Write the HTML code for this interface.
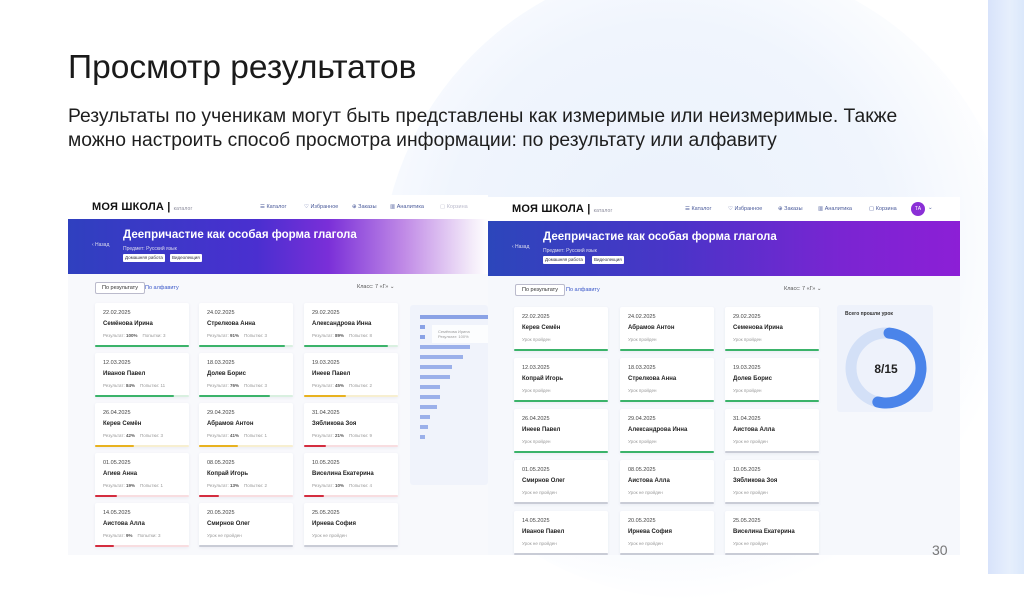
<!DOCTYPE html>
<html><head><meta charset="utf-8"><style>
*{margin:0;padding:0;box-sizing:border-box}
body{width:1024px;height:574px;overflow:hidden;position:relative;background:#fff;font-family:"Liberation Sans",sans-serif;color:#222}
.blob{position:absolute;left:380px;top:-40px;width:640px;height:640px;border-radius:50%;background:radial-gradient(circle at 45% 45%,#eaf1fc 0%,#f0f5fd 45%,rgba(246,249,254,.6) 62%,rgba(255,255,255,0) 71%)}
.strip{position:absolute;left:988px;top:0;width:36px;height:574px;background:linear-gradient(90deg,#d8e3fb,#e6effc 60%,#dbe8fb)}
h1{position:absolute;left:68px;top:49px;font-size:33.5px;font-weight:normal;color:#1a1a1a}
.p{position:absolute;left:68px;top:105px;font-size:19.3px;line-height:24px;color:#1e1e1e}
.shot{position:absolute;background:#f6f8fc;overflow:hidden}
.hdr{position:absolute;left:0;top:0;right:0;height:24px;background:#fff}
.logo{position:absolute;left:24px;top:6px;font-weight:bold;font-size:11px;color:#111;letter-spacing:.2px}
.logo i{font-style:normal;font-weight:normal;font-size:5px;color:#889;margin-left:3px}
.nav{position:absolute;top:9px;font-size:5.5px;color:#4a5a9a}
.ban{position:absolute;left:0;top:24px;right:0;height:55px}
.ban .t{position:absolute;left:55px;top:10px;color:#fff;font-weight:bold;font-size:11.5px}
.ban .s{position:absolute;left:55px;top:27px;color:#dde;font-size:5px}
.ban .b{position:absolute;top:35px;height:8px;background:#fff;color:#334;font-size:4.5px;line-height:8px;padding:0 2px;border-radius:1px}
.ban .k{position:absolute;left:24px;top:23px;color:#dde;font-size:5px}
.tab{position:absolute;top:87px;height:12px;font-size:5.5px;line-height:11px}
.tab.a{border:1px solid #bbc;border-radius:2px;background:#fff;padding:0 6px;color:#333}
.tab.b{color:#3b58c9}
.cls{position:absolute;top:89px;font-size:5.5px;color:#555}
.c{position:absolute;width:94px;height:44px;background:#fff;border-radius:2px;box-shadow:0 1px 3px rgba(80,90,140,.08)}
.c .d{position:absolute;left:8px;top:7px;font-size:5.5px;color:#444}
.c .n{position:absolute;left:8px;top:18px;font-size:6px;font-weight:bold;color:#222}
.c .r{position:absolute;left:8px;top:30px;font-size:4.5px;color:#999;white-space:nowrap}
.c .r b{color:#555}
.c .l{position:absolute;left:0;right:0;bottom:0;height:2px;border-radius:1px}
.c .l s{display:block;height:2px;border-radius:1px}
</style></head><body>
<div class="blob"></div>
<div class="strip"></div>
<h1>Просмотр результатов</h1>
<div class="p">Результаты по ученикам могут быть представлены как измеримые или неизмеримые. Также<br>можно настроить способ просмотра информации: по результату или алфавиту</div>

<!-- LEFT SCREENSHOT -->
<div class="shot" style="left:68px;top:195px;width:420px;height:360px;background:#f8f9fc">
<div class="hdr"><div class="logo">МОЯ ШКОЛА |<i>каталог</i></div>
<span class="nav" style="left:192px">☰ Каталог</span><span class="nav" style="left:236px">♡ Избранное</span><span class="nav" style="left:284px">⊕ Заказы</span><span class="nav" style="left:322px">▥ Аналитика</span><span class="nav" style="left:372px;color:#bbc">▢ Корзина</span></div>
<div class="ban" style="background:linear-gradient(90deg,#2f40bf 0%,#4a2fd0 45%,#7a2fd8 62%,#c08ae6 80%,#f3eaf9 96%,#fff 100%)">
<div class="k">‹ Назад</div><div class="t">Деепричастие как особая форма глагола</div><div class="s">Предмет: Русский язык</div>
<span class="b" style="left:55px">Домашняя работа</span><span class="b" style="left:102px">Видеолекция</span></div>
<span class="tab a" style="left:27px">По результату</span><span class="tab b" style="left:77px;top:88px">По алфавиту</span>
<span class="cls" style="left:289px">Класс: 7 «Г» ⌄</span>
<div style="position:absolute;left:342px;top:110px;width:78px;height:180px;background:#f0f3fb;border-radius:3px">
<div style="position:absolute;left:10px;top:10px;width:68px;height:4px;background:#8aa2e6"></div>
<div style="position:absolute;left:10px;top:20px;width:5px;height:4px;background:#8aa2e6"></div>
<div style="position:absolute;left:10px;top:30px;width:5px;height:4px;background:#8aa2e6"></div>
<div style="position:absolute;left:10px;top:40px;width:50px;height:4px;background:#9bb0ea"></div>
<div style="position:absolute;left:10px;top:50px;width:43px;height:4px;background:#9bb0ea"></div>
<div style="position:absolute;left:10px;top:60px;width:32px;height:4px;background:#9bb0ea"></div>
<div style="position:absolute;left:10px;top:70px;width:30px;height:4px;background:#9bb0ea"></div>
<div style="position:absolute;left:10px;top:80px;width:20px;height:4px;background:#9bb0ea"></div>
<div style="position:absolute;left:10px;top:90px;width:20px;height:4px;background:#9bb0ea"></div>
<div style="position:absolute;left:10px;top:100px;width:17px;height:4px;background:#9bb0ea"></div>
<div style="position:absolute;left:10px;top:110px;width:10px;height:4px;background:#9bb0ea"></div>
<div style="position:absolute;left:10px;top:120px;width:8px;height:4px;background:#9bb0ea"></div>
<div style="position:absolute;left:10px;top:130px;width:5px;height:4px;background:#9bb0ea"></div>
<div style="position:absolute;left:22px;top:20px;width:56px;height:18px;background:rgba(255,255,255,.8);font-size:4px;color:#999;padding:4px 6px">Семёнова Ирина<br>Результат: 100%</div>
</div>

<div class="c" style="left:27px;top:108px"><div class="d">22.02.2025</div><div class="n">Семёнова Ирина</div><div class="r">Результат: <b>100%</b> &nbsp;&nbsp; Попытки: 3</div><div class="l" style="background:#d9f0e0"><s style="width:100%;background:#3bb36a"></s></div></div>
<div class="c" style="left:131px;top:108px"><div class="d">24.02.2025</div><div class="n">Стрелкова Анна</div><div class="r">Результат: <b>91%</b> &nbsp;&nbsp; Попытки: 3</div><div class="l" style="background:#d9f0e0"><s style="width:91%;background:#3bb36a"></s></div></div>
<div class="c" style="left:236px;top:108px"><div class="d">29.02.2025</div><div class="n">Александрова Инна</div><div class="r">Результат: <b>89%</b> &nbsp;&nbsp; Попытки: 8</div><div class="l" style="background:#d9f0e0"><s style="width:89%;background:#3bb36a"></s></div></div>

<div class="c" style="left:27px;top:158px"><div class="d">12.03.2025</div><div class="n">Иванов Павел</div><div class="r">Результат: <b>84%</b> &nbsp;&nbsp; Попытки: 11</div><div class="l" style="background:#d9f0e0"><s style="width:84%;background:#3bb36a"></s></div></div>
<div class="c" style="left:131px;top:158px"><div class="d">18.03.2025</div><div class="n">Долев Борис</div><div class="r">Результат: <b>76%</b> &nbsp;&nbsp; Попытки: 3</div><div class="l" style="background:#d9f0e0"><s style="width:76%;background:#3bb36a"></s></div></div>
<div class="c" style="left:236px;top:158px"><div class="d">19.03.2025</div><div class="n">Инеев Павел</div><div class="r">Результат: <b>45%</b> &nbsp;&nbsp; Попытки: 2</div><div class="l" style="background:#f7efd0"><s style="width:45%;background:#e8b21f"></s></div></div>

<div class="c" style="left:27px;top:208px"><div class="d">26.04.2025</div><div class="n">Керев Семён</div><div class="r">Результат: <b>42%</b> &nbsp;&nbsp; Попытки: 3</div><div class="l" style="background:#f7efd0"><s style="width:42%;background:#e8b21f"></s></div></div>
<div class="c" style="left:131px;top:208px"><div class="d">29.04.2025</div><div class="n">Абрамов Антон</div><div class="r">Результат: <b>41%</b> &nbsp;&nbsp; Попытки: 1</div><div class="l" style="background:#f7efd0"><s style="width:41%;background:#e8b21f"></s></div></div>
<div class="c" style="left:236px;top:208px"><div class="d">31.04.2025</div><div class="n">Зябликова Зоя</div><div class="r">Результат: <b>21%</b> &nbsp;&nbsp; Попытки: 9</div><div class="l" style="background:#f8dde0"><s style="width:23%;background:#d42d3f"></s></div></div>

<div class="c" style="left:27px;top:258px"><div class="d">01.05.2025</div><div class="n">Агиев Анна</div><div class="r">Результат: <b>19%</b> &nbsp;&nbsp; Попытки: 1</div><div class="l" style="background:#f8dde0"><s style="width:23%;background:#d42d3f"></s></div></div>
<div class="c" style="left:131px;top:258px"><div class="d">08.05.2025</div><div class="n">Копрай Игорь</div><div class="r">Результат: <b>13%</b> &nbsp;&nbsp; Попытки: 2</div><div class="l" style="background:#f8dde0"><s style="width:21%;background:#d42d3f"></s></div></div>
<div class="c" style="left:236px;top:258px"><div class="d">10.05.2025</div><div class="n">Виселина Екатерина</div><div class="r">Результат: <b>10%</b> &nbsp;&nbsp; Попытки: 4</div><div class="l" style="background:#f8dde0"><s style="width:21%;background:#d42d3f"></s></div></div>

<div class="c" style="left:27px;top:308px"><div class="d">14.05.2025</div><div class="n">Аистова Алла</div><div class="r">Результат: <b>9%</b> &nbsp;&nbsp; Попытки: 3</div><div class="l" style="background:#f8dde0"><s style="width:20%;background:#d42d3f"></s></div></div>
<div class="c" style="left:131px;top:308px"><div class="d">20.05.2025</div><div class="n">Смирнов Олег</div><div class="r">Урок не пройден</div><div class="l" style="background:#c9ccd6"></div></div>
<div class="c" style="left:236px;top:308px"><div class="d">25.05.2025</div><div class="n">Ирнева София</div><div class="r">Урок не пройден</div><div class="l" style="background:#c9ccd6"></div></div>
</div>

<!-- RIGHT SCREENSHOT -->
<div class="shot" style="left:488px;top:197px;width:472px;height:358px">
<div class="hdr"><div class="logo">МОЯ ШКОЛА |<i>каталог</i></div>
<span class="nav" style="left:197px">☰ Каталог</span><span class="nav" style="left:240px">♡ Избранное</span><span class="nav" style="left:290px">⊕ Заказы</span><span class="nav" style="left:330px">▥ Аналитика</span><span class="nav" style="left:381px">▢ Корзина</span>
<div style="position:absolute;left:423px;top:5px;width:14px;height:14px;border-radius:50%;background:#8a2fd6;color:#fff;font-size:5px;text-align:center;line-height:14px">ТА</div><span class="nav" style="left:440px;top:8px">⌄</span></div>
<div class="ban" style="background:linear-gradient(90deg,#2c46bb 0%,#4a34c8 40%,#7a25d2 75%,#8c1fd6 100%)">
<div class="k">‹ Назад</div><div class="t">Деепричастие как особая форма глагола</div><div class="s">Предмет: Русский язык</div>
<span class="b" style="left:55px">Домашняя работа</span><span class="b" style="left:104px">Видеолекция</span></div>
<span class="tab a" style="left:27px">По результату</span><span class="tab b" style="left:78px;top:88px">По алфавиту</span>
<span class="cls" style="left:296px">Класс: 7 «Г» ⌄</span>

<div style="position:absolute;left:349px;top:108px;width:96px;height:107px;background:#eef2fb;border-radius:3px">
<div style="position:absolute;left:8px;top:6px;font-size:5px;font-weight:bold;color:#333">Всего прошли урок</div>
<svg style="position:absolute;left:0;top:0" width="96" height="107"><circle cx="49" cy="63" r="35" fill="none" stroke="#d3e0f7" stroke-width="11"/><circle cx="49" cy="63" r="35" fill="none" stroke="#4a84ea" stroke-width="11" stroke-linecap="round" stroke-dasharray="115 220" transform="rotate(-85 49 63)"/><text x="49" y="68" text-anchor="middle" font-family="Liberation Sans" font-weight="bold" font-size="12" fill="#222">8/15</text></svg>
</div>

<div class="c" style="left:26px;top:110px"><div class="d">22.02.2025</div><div class="n">Керев Семён</div><div class="r">Урок пройден</div><div class="l" style="background:#3bb36a"></div></div>
<div class="c" style="left:132px;top:110px"><div class="d">24.02.2025</div><div class="n">Абрамов Антон</div><div class="r">Урок пройден</div><div class="l" style="background:#3bb36a"></div></div>
<div class="c" style="left:237px;top:110px"><div class="d">29.02.2025</div><div class="n">Семенова Ирина</div><div class="r">Урок пройден</div><div class="l" style="background:#3bb36a"></div></div>

<div class="c" style="left:26px;top:161px"><div class="d">12.03.2025</div><div class="n">Копрай Игорь</div><div class="r">Урок пройден</div><div class="l" style="background:#3bb36a"></div></div>
<div class="c" style="left:132px;top:161px"><div class="d">18.03.2025</div><div class="n">Стрелкова Анна</div><div class="r">Урок пройден</div><div class="l" style="background:#3bb36a"></div></div>
<div class="c" style="left:237px;top:161px"><div class="d">19.03.2025</div><div class="n">Долев Борис</div><div class="r">Урок пройден</div><div class="l" style="background:#3bb36a"></div></div>

<div class="c" style="left:26px;top:212px"><div class="d">26.04.2025</div><div class="n">Инеев Павел</div><div class="r">Урок пройден</div><div class="l" style="background:#3bb36a"></div></div>
<div class="c" style="left:132px;top:212px"><div class="d">29.04.2025</div><div class="n">Александрова Инна</div><div class="r">Урок пройден</div><div class="l" style="background:#3bb36a"></div></div>
<div class="c" style="left:237px;top:212px"><div class="d">31.04.2025</div><div class="n">Аистова Алла</div><div class="r">Урок не пройден</div><div class="l" style="background:#c9ccd6"></div></div>

<div class="c" style="left:26px;top:263px"><div class="d">01.05.2025</div><div class="n">Смирнов Олег</div><div class="r">Урок не пройден</div><div class="l" style="background:#c9ccd6"></div></div>
<div class="c" style="left:132px;top:263px"><div class="d">08.05.2025</div><div class="n">Аистова Алла</div><div class="r">Урок не пройден</div><div class="l" style="background:#c9ccd6"></div></div>
<div class="c" style="left:237px;top:263px"><div class="d">10.05.2025</div><div class="n">Зябликова Зоя</div><div class="r">Урок не пройден</div><div class="l" style="background:#c9ccd6"></div></div>

<div class="c" style="left:26px;top:314px"><div class="d">14.05.2025</div><div class="n">Иванов Павел</div><div class="r">Урок не пройден</div><div class="l" style="background:#c9ccd6"></div></div>
<div class="c" style="left:132px;top:314px"><div class="d">20.05.2025</div><div class="n">Ирнева София</div><div class="r">Урок не пройден</div><div class="l" style="background:#c9ccd6"></div></div>
<div class="c" style="left:237px;top:314px"><div class="d">25.05.2025</div><div class="n">Виселина Екатерина</div><div class="r">Урок не пройден</div><div class="l" style="background:#c9ccd6"></div></div>
</div>

<div style="position:absolute;left:932px;top:542px;font-size:14px;color:#777">30</div>
</body></html>
